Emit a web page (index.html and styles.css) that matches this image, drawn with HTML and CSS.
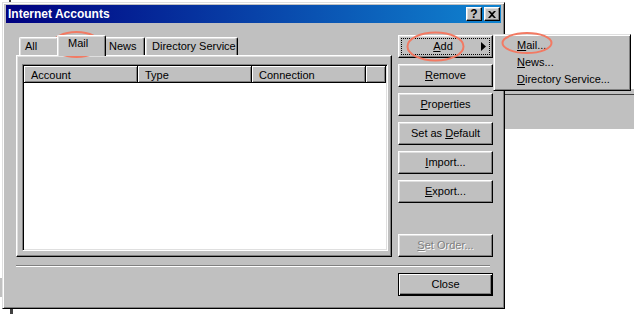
FILE: index.html
```html
<!DOCTYPE html>
<html lang="en">
<head>
    <meta charset="UTF-8">
    <title>Internet Accounts</title>
    <link rel="stylesheet" href="styles.css">
</head>
<body>
    <div class="desk">
        <!-- bits of other windows behind the dialog -->
        <div class="behind behind-right"></div>
        <div class="behind behind-left"></div>
        <div class="behind behind-top"></div>
        <div class="behind behind-bottom"></div>

        <div class="window dialog">
            <div class="titlebar">
                <span class="title">Internet Accounts</span>
                <div class="title-btns">
                    <span class="tbtn">?</span>
                    <span class="tbtn">
                        <svg width="8" height="7" viewBox="0 0 8 7"><path d="M0 0h2l2 2 2-2h2L5 3.5 8 7H6L4 5 2 7H0l3-3.5z" fill="#000"/></svg>
                    </span>
                </div>
            </div>

            <div class="dialog-body">
                <div class="main">
                    <div class="left">
                        <div class="tabs">
                            <div class="tab tab-all">All</div>
                            <div class="tab tab-mail selected">Mail</div>
                            <div class="tab tab-news">News</div>
                            <div class="tab tab-dir">Directory Service</div>
                        </div>
                        <div class="panel">
                            <div class="listview">
                                <div class="lv-header">
                                    <div class="col">Account</div>
                                    <div class="col">Type</div>
                                    <div class="col">Connection</div>
                                    <div class="col col-fill"></div>
                                </div>
                            </div>
                        </div>
                    </div>

                    <div class="buttons">
                        <div class="btn btn-add focus">
                            <span class="label"><u>A</u>dd</span>
                            <svg class="arrow" width="5" height="9" viewBox="0 0 5 9"><path d="M0 0L5 4.5 0 9z" fill="#000"/></svg>
                        </div>
                        <div class="btn"><span><u>R</u>emove</span></div>
                        <div class="btn"><span><u>P</u>roperties</span></div>
                        <div class="btn"><span>Set as <u>D</u>efault</span></div>
                        <div class="btn"><span><u>I</u>mport...</span></div>
                        <div class="btn"><span><u>E</u>xport...</span></div>
                        <div class="btn disabled btn-order"><span><u>S</u>et Order...</span></div>
                    </div>
                </div>

                <div class="separator"></div>

                <div class="footer">
                    <div class="btn default"><span>Close</span></div>
                </div>
            </div>
        </div>

        <div class="menu">
            <div class="menu-item"><u>M</u>ail...</div>
            <div class="menu-item"><u>N</u>ews...</div>
            <div class="menu-item"><u>D</u>irectory Service...</div>
        </div>

        <svg class="marks" width="634" height="314">
            <ellipse cx="76.5" cy="44.5" rx="24" ry="12.5"/>
            <ellipse cx="435.5" cy="46.5" rx="28" ry="14"/>
            <ellipse cx="527" cy="43" rx="24.5" ry="10"/>
        </svg>
    </div>
</body>
</html>
```

FILE: styles.css
```css
body {
    margin: 0;
    background: #fff;
    font-family: "Liberation Sans", Arial, sans-serif;
    font-size: 11px;
    color: #000;
}

.desk {
    position: relative;
    width: 634px;
    height: 314px;
    overflow: hidden;
}

/* other windows peeking out */
.behind {
    position: absolute;
    background: #c0c0c0;
}

.behind-right {
    left: 505px;
    top: 88px;
    width: 129px;
    height: 40px;
    border-top: 1px solid #fff;
    box-shadow: inset 0 5px 0 #c0c0c0, inset 0 6px 0 #404040;
}

.behind-left {
    left: 0;
    top: 278px;
    width: 3px;
    height: 19px;
    border-right: 1px solid #808080;
    box-shadow: inset -1px 0 #fff;
}

.behind-top {
    left: 9px;
    top: 0;
    width: 2px;
    height: 2px;
    background: #404040;
}

.behind-bottom {
    left: 10px;
    top: 309px;
    width: 3px;
    height: 5px;
    background: #404040;
}

/* dialog window */
.window {
    background: #c0c0c0;
    border: 1px solid;
    border-color: #dfdfdf #000 #000 #dfdfdf;
    box-shadow: inset 1px 1px #fff, inset -1px -1px #808080;
    box-sizing: border-box;
}

.dialog {
    position: relative;
    margin: 2px 0 0 2px;
    width: 503px;
    height: 307px;
    padding: 2px 3px 3px 3px;
    display: flex;
    flex-direction: column;
}

.titlebar {
    height: 18px;
    background: linear-gradient(to right, #000080, #1084d0);
    color: #fff;
    font-weight: bold;
    display: flex;
    align-items: center;
    justify-content: space-between;
    padding: 0 1px 0 2px;
}

.title {
    font-size: 12px;
    line-height: 18px;
}

.title-btns {
    display: flex;
    gap: 2px;
}

.tbtn {
    width: 16px;
    height: 14px;
    box-sizing: border-box;
    background: #c0c0c0;
    border: 1px solid;
    border-color: #fff #000 #000 #fff;
    box-shadow: inset -1px -1px #808080, inset 1px 1px #dfdfdf;
    color: #000;
    font-size: 12px;
    font-weight: bold;
    line-height: 12px;
    display: flex;
    align-items: center;
    justify-content: center;
}

.dialog-body {
    flex: 1;
    padding: 12px 8px 0 10px;
    display: flex;
    flex-direction: column;
}

.main {
    display: flex;
    gap: 6px;
}

.left {
    width: 376px;
    display: flex;
    flex-direction: column;
}

/* tabs */
.tabs {
    display: flex;
    height: 20px;
    padding-left: 3px;
    position: relative;
    z-index: 1;
}

.tab {
    box-sizing: border-box;
    height: 18px;
    margin-top: 2px;
    border-top: 1px solid #fff;
    border-left: 1px solid #fff;
    border-right: 1px solid #000;
    border-radius: 2px 2px 0 0;
    box-shadow: inset -1px 0 #808080, inset 1px 1px #dfdfdf;
    background: #c0c0c0;
    line-height: 17px;
    white-space: nowrap;
}

.tab-all {
    width: 40px;
    padding-left: 5px;
}

.tab-news {
    width: 41px;
    padding-left: 4px;
}

.tab-dir {
    width: 93px;
    padding-left: 6px;
}

.tab.selected {
    height: 21px;
    margin-top: 0;
    margin-left: -2px;
    margin-right: -2px;
    width: 49px;
    padding-left: 10px;
    position: relative;
    z-index: 2;
    line-height: 15px;
}

.panel {
    height: 202px;
    box-sizing: border-box;
    border: 1px solid;
    border-color: #fff #000 #000 #fff;
    box-shadow: inset -1px -1px #808080, inset 1px 1px #dfdfdf;
    padding: 8px 3px 5px 5px;
    display: flex;
}

.listview {
    flex: 1;
    background: #fff;
    border: 1px solid;
    border-color: #808080 #fff #fff #808080;
    box-shadow: inset 1px 1px #000, inset -1px -1px #dfdfdf;
    padding: 1px;
}

.lv-header {
    display: flex;
    height: 17px;
}

.col {
    width: 114px;
    box-sizing: border-box;
    background: #c0c0c0;
    border-right: 1px solid #000;
    border-bottom: 1px solid #000;
    box-shadow: inset 1px 1px #fff, inset -1px -1px #808080;
    padding: 1px 0 0 7px;
    line-height: 16px;
}

.col-fill {
    flex: 1;
    width: auto;
}

/* buttons */
.buttons {
    width: 95px;
    display: flex;
    flex-direction: column;
    gap: 6px;
}

.btn {
    width: 95px;
    height: 23px;
    box-sizing: border-box;
    background: #c0c0c0;
    border: 1px solid;
    border-color: #fff #000 #000 #fff;
    box-shadow: inset -1px -1px #808080, inset 1px 1px #dfdfdf;
    display: flex;
    align-items: center;
    justify-content: center;
    line-height: 13px;
    white-space: nowrap;
}

.btn-add {
    justify-content: space-between;
    outline: 1px dotted #000;
    outline-offset: -4px;
}

.btn-add .label {
    flex: 1;
    text-align: center;
    padding-left: 6px;
}

.btn-add .arrow {
    margin-right: 6px;
}

.btn.disabled {
    color: #808080;
    text-shadow: 1px 1px #fff;
}

.btn-order {
    margin-top: auto;
}

.btn.default {
    border-color: #000;
    box-shadow: inset 1px 1px #fff, inset -1px -1px #000, inset -2px -2px #808080;
}

.separator {
    margin: 8px 3px 0 0;
    height: 0;
    border-top: 1px solid #808080;
    border-bottom: 1px solid #fff;
}

.footer {
    display: flex;
    justify-content: flex-end;
    margin-top: 6px;
}

/* popup menu from Add */
.menu {
    position: absolute;
    left: 493px;
    top: 34px;
    width: 138px;
    height: 57px;
    box-sizing: border-box;
    background: #c0c0c0;
    border: 1px solid;
    border-color: #dfdfdf #000 #000 #dfdfdf;
    box-shadow: inset 1px 1px #fff, inset -1px -1px #808080;
    padding: 2px;
}

.menu-item {
    height: 17px;
    line-height: 17px;
    padding-left: 21px;
    white-space: nowrap;
}

/* red hand-drawn circles */
.marks {
    position: absolute;
    left: 0;
    top: 0;
    pointer-events: none;
}

.marks ellipse {
    fill: none;
    stroke: #f27a63;
    stroke-width: 2;
}
```
